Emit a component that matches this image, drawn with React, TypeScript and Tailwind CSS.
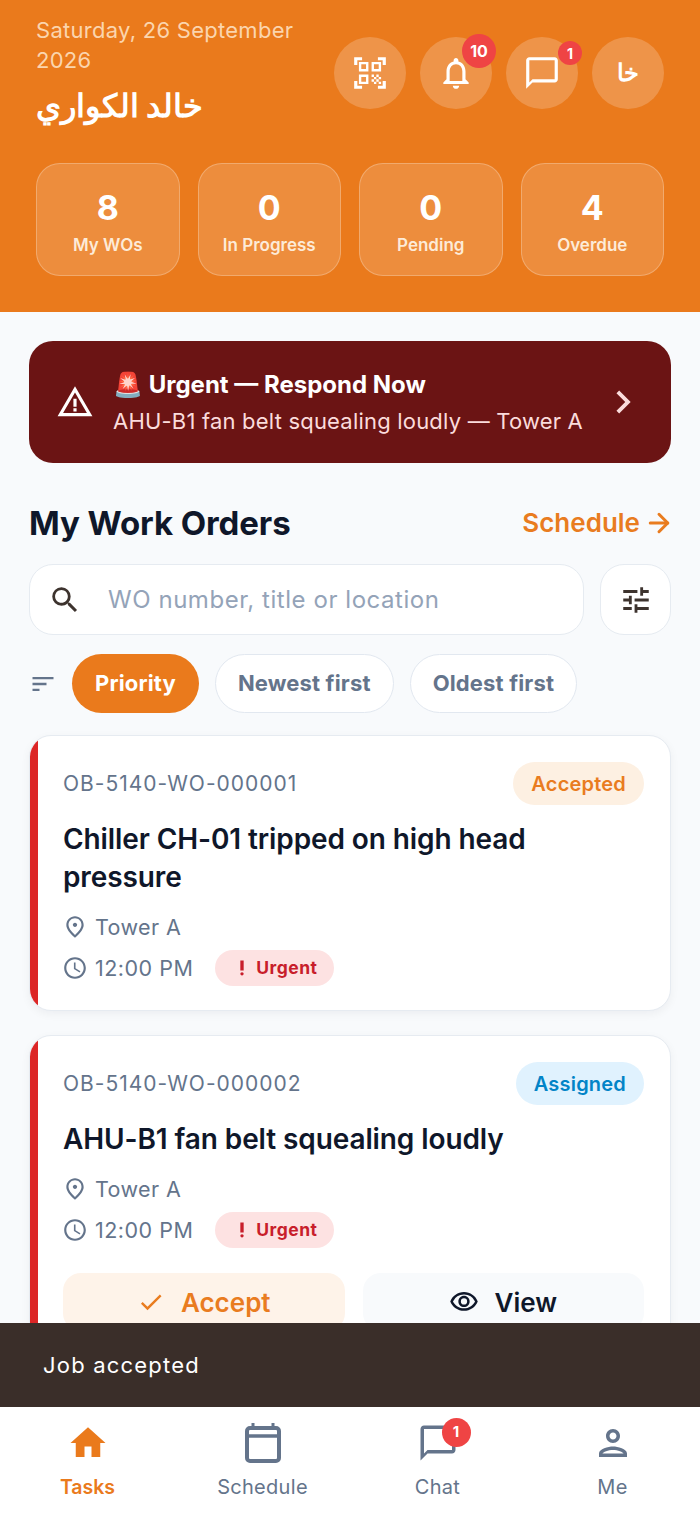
import type { ReactNode } from 'react';
import { ArrowRight } from 'lucide-react';
import {
  MdAccessTime,
  MdCheck,
  MdChevronRight,
  MdHome,
  MdOutlineChatBubbleOutline,
  MdOutlineNotifications,
  MdOutlinePerson,
  MdOutlinePlace,
  MdOutlineVisibility,
  MdPriorityHigh,
  MdQrCodeScanner,
  MdSearch,
  MdSort,
  MdTune,
  MdWarningAmber,
} from 'react-icons/md';

const stats = [
  { value: '8', label: 'My WOs' },
  { value: '0', label: 'In Progress' },
  { value: '0', label: 'Pending' },
  { value: '4', label: 'Overdue' },
];

function RoundButton({ children, badge }: { children: ReactNode; badge?: string }) {
  return (
    <div className="relative w-[72px] h-[72px] rounded-full bg-white/20 flex items-center justify-center text-white">
      {children}
      {badge && (
        <span
          className={`absolute bg-[#ef4444] rounded-full flex items-center justify-center text-white font-bold ${
            badge.length > 1
              ? 'w-[34px] h-[34px] -top-[3px] right-[-4px] text-[16px]'
              : 'w-[24px] h-[24px] top-[4px] right-[-4px] text-[14px]'
          }`}
        >
          {badge}
        </span>
      )}
    </div>
  );
}

function UrgentPill() {
  return (
    <span className="ml-[22px] h-[36px] w-[119px] rounded-full bg-[#fde2e2] text-[#c81e2b] flex items-center justify-center gap-[4px] text-[17.5px] tracking-[0.5px] font-bold">
      <MdPriorityHigh size={20} />
      Urgent
    </span>
  );
}

function CalendarIcon() {
  return (
    <svg width="36" height="40" viewBox="0 0 36 40" fill="none" stroke="currentColor" strokeWidth="4">
      <rect x="2" y="5" width="32" height="33" rx="3" />
      <path d="M2 13h32" strokeWidth="3.5" />
      <path d="M8 0v5M28 0v5" strokeWidth="3" />
    </svg>
  );
}

function WorkOrderCard({
  number,
  title,
  status,
  statusClass,
  actions,
}: {
  number: string;
  title: string;
  status: string;
  statusClass: string;
  actions?: boolean;
}) {
  return (
    <div className="flex overflow-hidden rounded-[22px] bg-white border border-[#e6ebf1] shadow-[0_3px_10px_rgba(15,23,42,0.05)]">
      <div className="w-[8px] shrink-0 bg-[#dc2626]" />
      <div className="flex-1 pl-[25px] pr-[26px] pt-[26px] pb-[24px]">
        <div className="flex items-center justify-between h-[43px]">
          <span className="text-[21px] tracking-[1px] text-[#64748b]">{number}</span>
          <span className={`h-[43px] px-[18px] rounded-full flex items-center text-[20px] tracking-[0.2px] font-semibold ${statusClass}`}>
            {status}
          </span>
        </div>
        <h3 className="mt-[15px] text-[28px] leading-[38px] font-semibold text-[#0f172a] tracking-[-0.1px] pr-[60px]">{title}</h3>
        <div className="mt-[17px] flex items-center h-[28px] text-[21.5px] tracking-[0.4px] text-[#64748b]">
          <MdOutlinePlace size={26} className="-ml-[1px]" />
          <span className="ml-[7px]">Tower A</span>
        </div>
        <div className="mt-[9px] flex items-center h-[36px] text-[21.5px] tracking-[0.5px] text-[#64748b]">
          <MdAccessTime size={26} className="-ml-[1px]" />
          <span className="ml-[7px]">12:00 PM</span>
          <UrgentPill />
        </div>
        {actions && (
          <div className="mt-[25px] grid grid-cols-2 gap-[18px]">
            <div className="h-[58px] rounded-[18px] bg-[#fef3e9] text-[#e97c1f] flex items-center justify-center gap-[16px] text-[26px] font-semibold">
              <MdCheck size={28} />
              Accept
            </div>
            <div className="h-[58px] rounded-[18px] bg-[#f8fafc] text-[#0f172a] flex items-center justify-center gap-[15px] text-[26px] font-semibold">
              <MdOutlineVisibility size={30} />
              View
            </div>
          </div>
        )}
      </div>
    </div>
  );
}

function NavItem({ icon, label, active }: { icon: ReactNode; label: string; active?: boolean }) {
  return (
    <div className={`flex flex-col items-center ${active ? 'text-[#ea7a1c]' : 'text-[#64748b]'}`}>
      <div className="h-[48px] flex items-center justify-center">{icon}</div>
      <span className={`mt-[6px] leading-[28px] ${active ? 'text-[19.5px] font-semibold' : 'text-[20px] tracking-[0.3px] font-normal'}`}>{label}</span>
    </div>
  );
}

export default function App() {
  return (
    <div className="w-[700px] h-[1515px] flex flex-col overflow-hidden bg-[#f8fafc] font-['Inter','Noto_Sans',sans-serif]">
      {/* Header */}
      <header className="h-[312px] shrink-0 bg-[#ea7a1c] px-[36px] pt-[15px]">
        <div className="flex justify-between">
          <div className="w-[280px]">
            <p className="text-[22px] leading-[30px] tracking-[0.27px] text-[#fbd5ae]">Saturday, 26 September 2026</p>
            <p className="mt-[11px] w-fit text-[31.5px] leading-[40px] font-bold text-white" dir="rtl">خالد الكواري</p>
          </div>
          <div className="flex gap-[14px] pt-[22px]">
            <RoundButton>
              <MdQrCodeScanner size={38} />
            </RoundButton>
            <RoundButton badge="10">
              <MdOutlineNotifications size={38} />
            </RoundButton>
            <RoundButton badge="1">
              <MdOutlineChatBubbleOutline size={38} />
            </RoundButton>
            <RoundButton>
              <span className="text-[24px] font-bold">خا</span>
            </RoundButton>
          </div>
        </div>
        <div className="mt-[37px] grid grid-cols-4 gap-[18px]">
          {stats.map((s) => (
            <div key={s.label} className="h-[113px] pt-[4px] rounded-[24px] bg-white/15 border border-white/25 flex flex-col items-center justify-center text-white">
              <span className="text-[34px] leading-[42px] font-bold">{s.value}</span>
              <span className="mt-[4px] text-[17px] leading-[24px] font-semibold text-[#fdebd8]">{s.label}</span>
            </div>
          ))}
        </div>
      </header>

      {/* Scrolling content */}
      <main className="flex-1 overflow-hidden px-[29px] pt-[29px]">
        <div className="h-[122px] rounded-[24px] bg-[#6b1414] flex items-center pl-[27px] pr-[25px] text-white">
          <MdWarningAmber size={38} />
          <div className="ml-[19px] flex-1">
            <p className="text-[24px] leading-[32px] font-bold">🚨 Urgent — Respond Now</p>
            <p className="mt-[5px] text-[22px] leading-[30px] tracking-[0.2px] text-[#fbdcdc]">AHU-B1 fan belt squealing loudly — Tower A</p>
          </div>
          <MdChevronRight size={46} className="text-[#fbdcdc]" />
        </div>

        <div className="mt-[38px] flex items-center justify-between h-[46px]">
          <h2 className="text-[33px] font-bold text-[#0f172a] tracking-[-0.1px]">My Work Orders</h2>
          <div className="-mt-[3px] -mr-[3px] flex items-center gap-[4px] text-[#e97c1f] text-[26px] font-semibold">
            Schedule
            <ArrowRight size={30} strokeWidth={2.4} />
          </div>
        </div>

        <div className="mt-[17px] flex gap-[16px]">
          <div className="flex-1 h-[71px] rounded-[24px] bg-white border border-[#e6ebf1] flex items-center pl-[18px]">
            <MdSearch size={34} className="text-[#3d332e]" />
            <span className="ml-[26px] text-[24px] tracking-[0.55px] text-[#94a3b8]">WO number, title or location</span>
          </div>
          <div className="w-[71px] h-[71px] rounded-[24px] bg-white border border-[#e6ebf1] flex items-center justify-center text-[#3d332e]">
            <MdTune size={34} />
          </div>
        </div>

        <div className="mt-[19px] flex items-center">
          <MdSort size={28} className="text-[#64748b]" />
          <span className="ml-[15px] h-[59px] px-[23px] rounded-full bg-[#ea7a1c] text-white flex items-center text-[22px] tracking-[0.15px] font-bold">Priority</span>
          <span className="ml-[16px] h-[59px] px-[22px] rounded-full bg-white border border-[#e2e8f0] text-[#64748b] flex items-center text-[22px] tracking-[0.15px] font-bold">Newest first</span>
          <span className="ml-[16px] h-[59px] px-[22px] rounded-full bg-white border border-[#e2e8f0] text-[#64748b] flex items-center text-[22px] tracking-[0.15px] font-bold">Oldest first</span>
        </div>

        <div className="mt-[22px] flex flex-col gap-[24px]">
          <WorkOrderCard
            number="OB-5140-WO-000001"
            title="Chiller CH-01 tripped on high head pressure"
            status="Accepted"
            statusClass="bg-[#fdf0e2] text-[#e97c1f]"
          />
          <WorkOrderCard
            number="OB-5140-WO-000002"
            title="AHU-B1 fan belt squealing loudly"
            status="Assigned"
            statusClass="bg-[#e0f2fe] text-[#0284c7]"
            actions
          />
        </div>
      </main>

      {/* Snackbar */}
      <div className="h-[84px] shrink-0 bg-[#3a2e29] flex items-center pl-[43px] text-[22px] tracking-[1.2px] text-white">Job accepted</div>

      {/* Bottom nav */}
      <nav className="h-[108px] shrink-0 bg-white grid grid-cols-4 pt-[12px]">
        <NavItem icon={<MdHome size={42} />} label="Tasks" active />
        <NavItem icon={<CalendarIcon />} label="Schedule" />
        <NavItem
          icon={
            <div className="relative">
              <MdOutlineChatBubbleOutline size={42} />
              <span className="absolute -top-[4px] -right-[12px] w-[29px] h-[29px] rounded-full bg-[#ef4444] text-white text-[15px] font-bold flex items-center justify-center">1</span>
            </div>
          }
          label="Chat"
        />
        <NavItem icon={<MdOutlinePerson size={42} />} label="Me" />
      </nav>
    </div>
  );
}
